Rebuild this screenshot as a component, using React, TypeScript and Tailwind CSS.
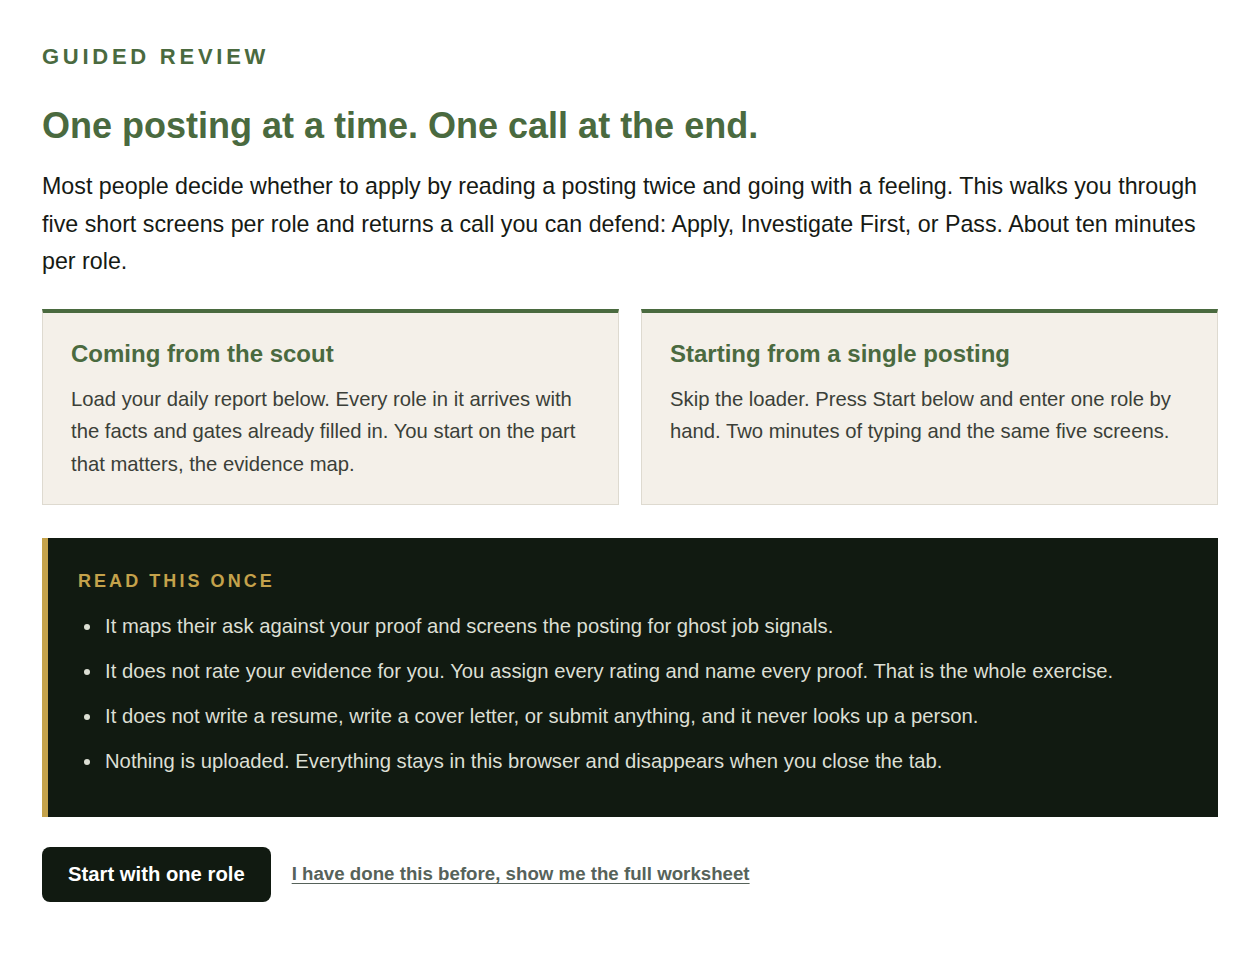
export default function App() {
  const notes = [
    "It maps their ask against your proof and screens the posting for ghost job signals.",
    "It does not rate your evidence for you. You assign every rating and name every proof. That is the whole exercise.",
    "It does not write a resume, write a cover letter, or submit anything, and it never looks up a person.",
    "Nothing is uploaded. Everything stays in this browser and disappears when you close the tab.",
  ]

  return (
    <div className="min-h-screen bg-white px-[42px] pt-[43px] pb-10 font-['Liberation_Sans',Arial,sans-serif]">
      {/* intro */}
      <p className="text-[22px] font-bold uppercase leading-7 tracking-[0.17em] text-[#4a6a3f]">Guided review</p>
      <h1 className="mt-[33px] text-[36px] font-bold leading-[44px] text-[#4a6a3f]">
        One posting at a time. One call at the end.
      </h1>
      <p className="mt-[20px] text-[23.25px] leading-[37.5px] text-[#161a14]">
        Most people decide whether to apply by reading a posting twice and going with a feeling. This walks you through
        five short screens per role and returns a call you can defend: Apply, Investigate First, or Pass. About ten minutes
        per role.
      </p>

      {/* two entry points */}
      <div className="mt-[28px] grid grid-cols-2 gap-[22px]">
        <div className="border border-t-4 border-[#dedad0] border-t-[#4a6a3f] bg-[#f4f0e9] px-[28px] pt-[26px] pb-[24px]">
          <h2 className="text-[24px] font-bold leading-[30px] text-[#4a6a3f]">Coming from the scout</h2>
          <p className="mt-[14px] text-[20.25px] leading-[32.5px] text-[#3b3f38]">
            Load your daily report below. Every role in it arrives with the facts and gates already filled in. You start
            on the part that matters, the evidence map.
          </p>
        </div>
        <div className="border border-t-4 border-[#dedad0] border-t-[#4a6a3f] bg-[#f4f0e9] px-[28px] pt-[26px] pb-[24px]">
          <h2 className="text-[24px] font-bold leading-[30px] text-[#4a6a3f]">Starting from a single posting</h2>
          <p className="mt-[14px] text-[20.25px] leading-[32.5px] text-[#3b3f38]">
            Skip the loader. Press Start below and enter one role by hand. Two minutes of typing and the same five screens.
          </p>
        </div>
      </div>

      {/* caveats */}
      <div className="mt-[33px] border-l-[6px] border-[#c4a24b] bg-[#111a11] pl-[30px] pr-8 pt-[31px] pb-[33px]">
        <p className="text-[18px] font-bold uppercase leading-6 tracking-[0.17em] text-[#c4a24b]">Read this once</p>
        <ul className="mt-[11px] flex flex-col">
          {notes.map((n) => (
            <li key={n} className="flex items-center gap-[15px] py-[6px] text-[20.25px] leading-[33px] text-[#dcdfd4]">
              <span className="ml-[6px] h-[6px] w-[6px] shrink-0 rounded-full bg-[#dcdfd4]" />
              <span>{n}</span>
            </li>
          ))}
        </ul>
      </div>

      {/* actions */}
      <div className="mt-[30px] flex items-center gap-[21px]">
        <button className="h-[55px] rounded-[8px] bg-[#111a11] px-[26px] text-[20.25px] font-bold text-white">
          Start with one role
        </button>
        <a href="#" className="text-[18.7px] font-bold text-[#56625a] underline underline-offset-[3px]">
          I have done this before, show me the full worksheet
        </a>
      </div>
    </div>
  )
}
